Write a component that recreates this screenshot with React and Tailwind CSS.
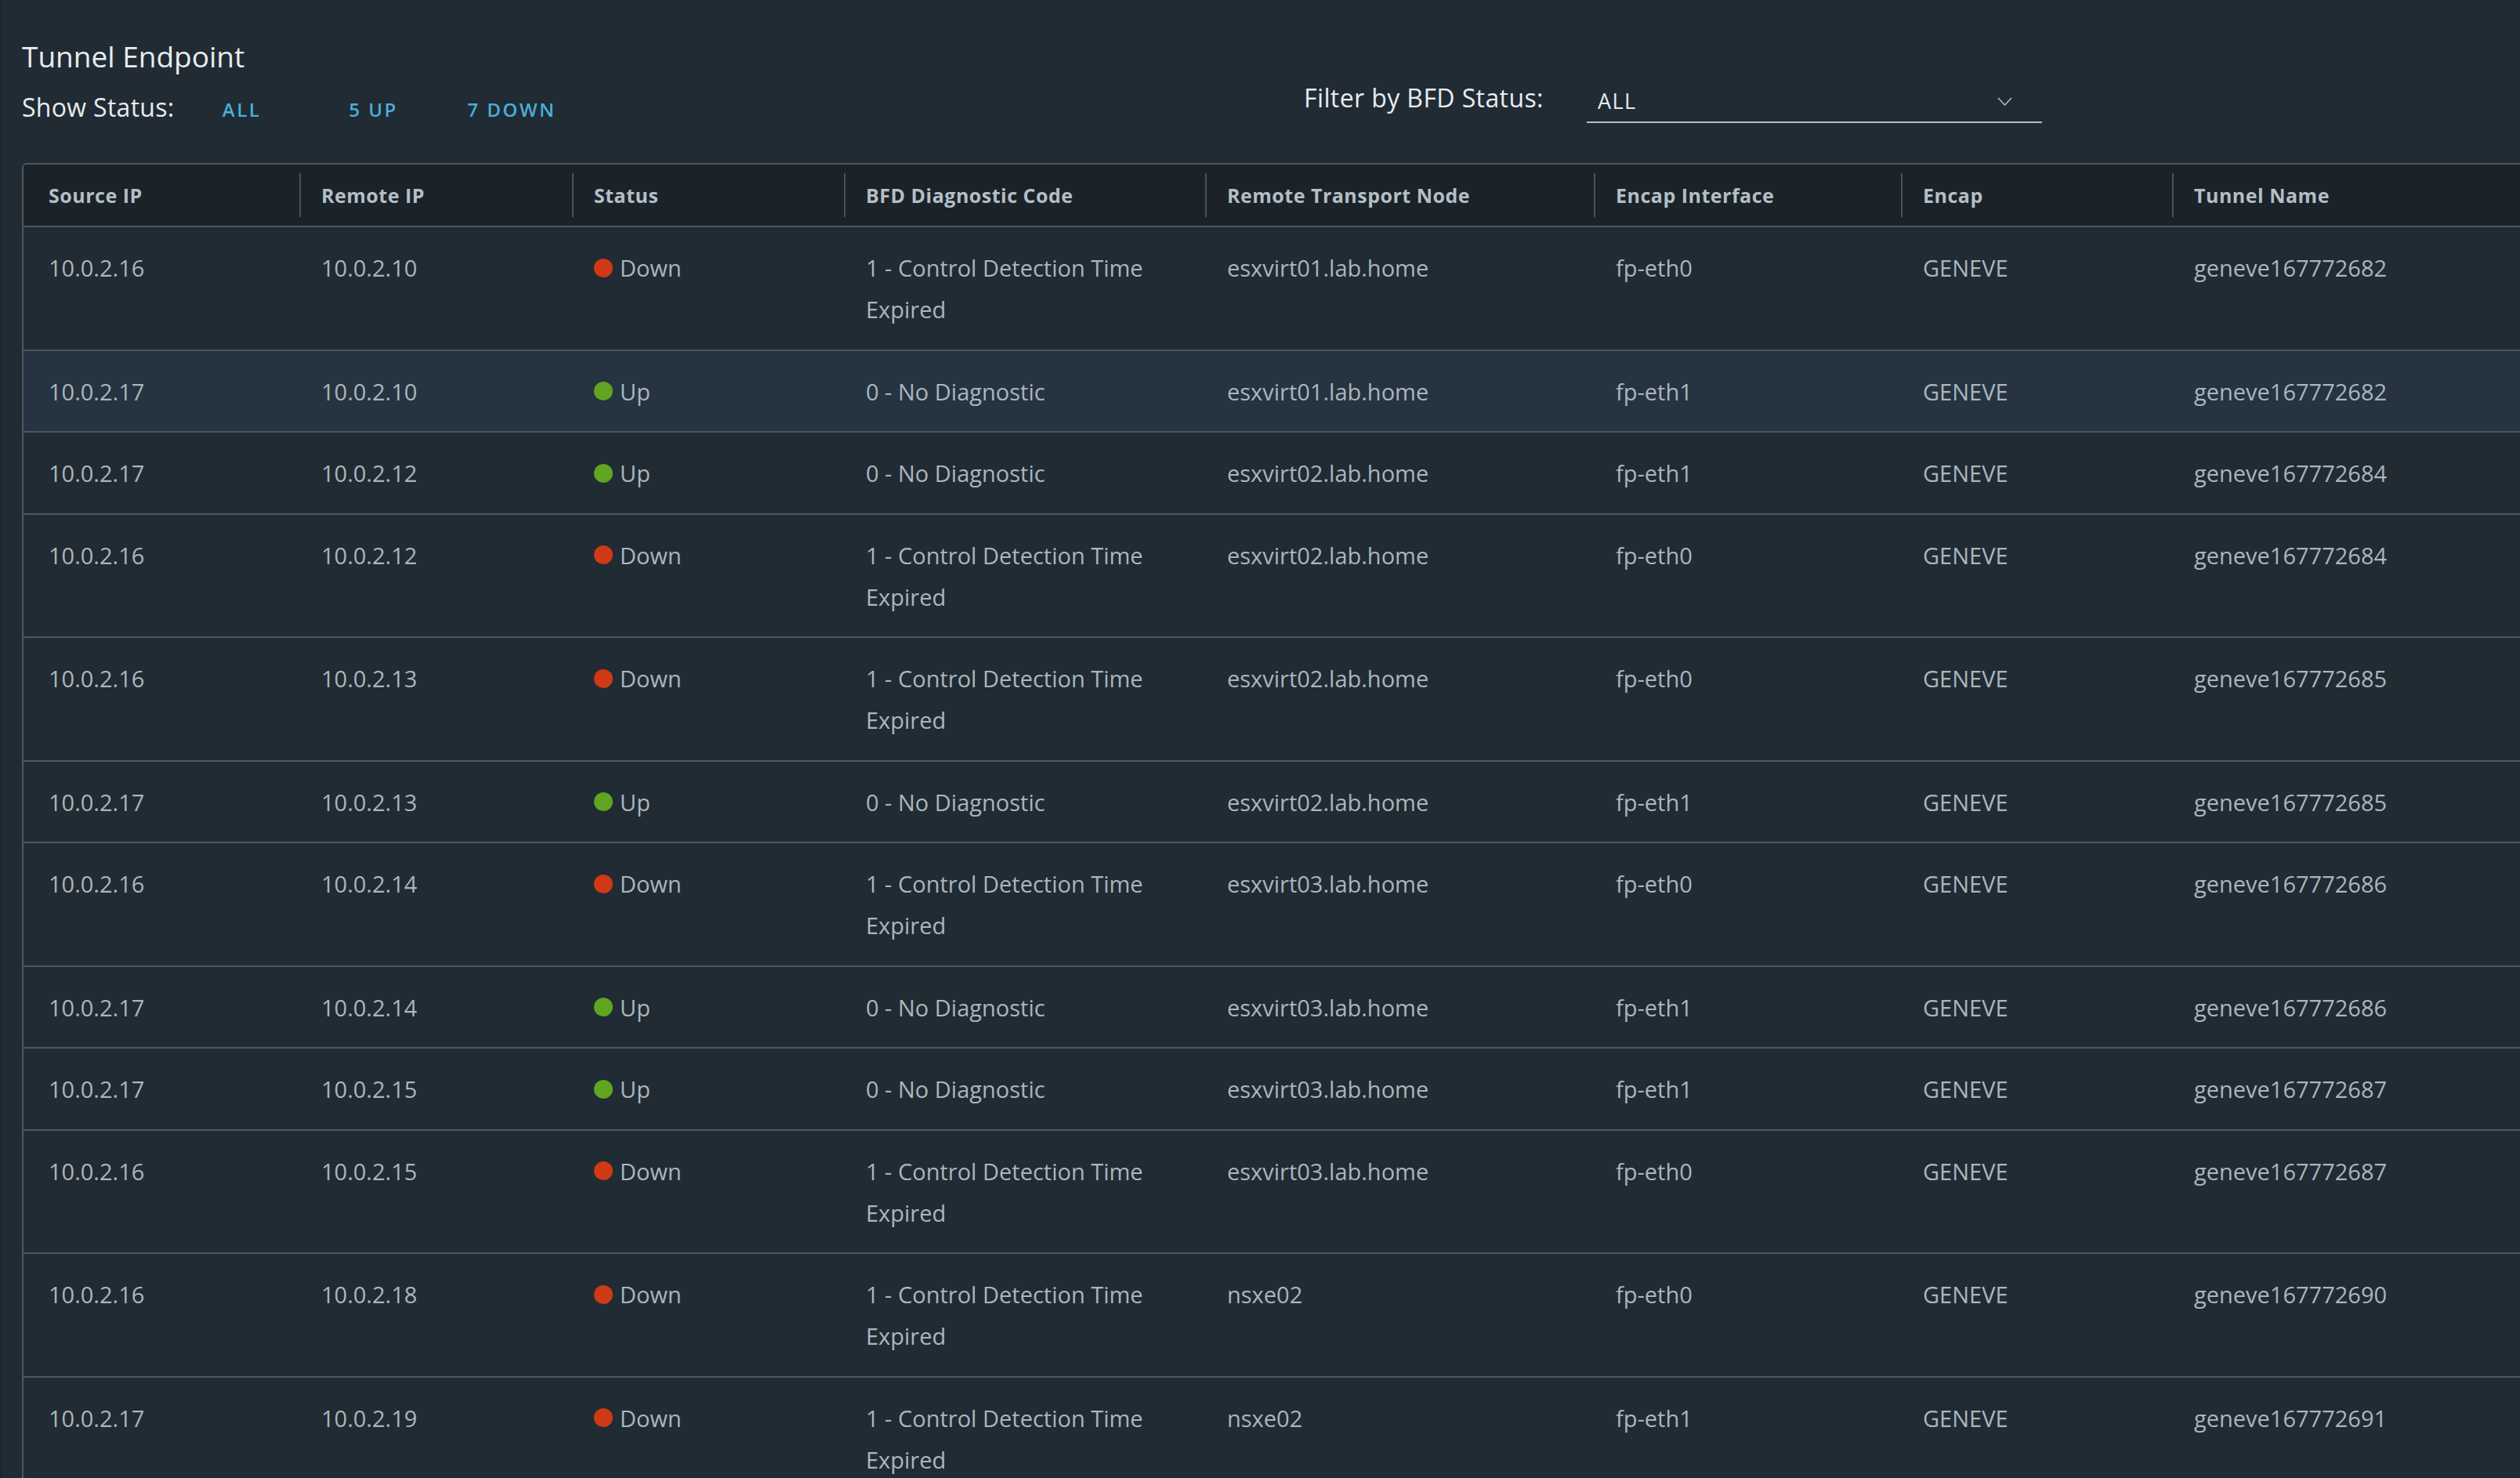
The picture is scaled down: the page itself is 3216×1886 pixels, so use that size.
import React from "react";

const rows = [
  { src: "10.0.2.16", remote: "10.0.2.10", up: false, node: "esxvirt01.lab.home", iface: "fp-eth0", tunnel: "geneve167772682" },
  { src: "10.0.2.17", remote: "10.0.2.10", up: true, node: "esxvirt01.lab.home", iface: "fp-eth1", tunnel: "geneve167772682", active: true },
  { src: "10.0.2.17", remote: "10.0.2.12", up: true, node: "esxvirt02.lab.home", iface: "fp-eth1", tunnel: "geneve167772684" },
  { src: "10.0.2.16", remote: "10.0.2.12", up: false, node: "esxvirt02.lab.home", iface: "fp-eth0", tunnel: "geneve167772684" },
  { src: "10.0.2.16", remote: "10.0.2.13", up: false, node: "esxvirt02.lab.home", iface: "fp-eth0", tunnel: "geneve167772685" },
  { src: "10.0.2.17", remote: "10.0.2.13", up: true, node: "esxvirt02.lab.home", iface: "fp-eth1", tunnel: "geneve167772685" },
  { src: "10.0.2.16", remote: "10.0.2.14", up: false, node: "esxvirt03.lab.home", iface: "fp-eth0", tunnel: "geneve167772686" },
  { src: "10.0.2.17", remote: "10.0.2.14", up: true, node: "esxvirt03.lab.home", iface: "fp-eth1", tunnel: "geneve167772686" },
  { src: "10.0.2.17", remote: "10.0.2.15", up: true, node: "esxvirt03.lab.home", iface: "fp-eth1", tunnel: "geneve167772687" },
  { src: "10.0.2.16", remote: "10.0.2.15", up: false, node: "esxvirt03.lab.home", iface: "fp-eth0", tunnel: "geneve167772687" },
  { src: "10.0.2.16", remote: "10.0.2.18", up: false, node: "nsxe02", iface: "fp-eth0", tunnel: "geneve167772690" },
  { src: "10.0.2.17", remote: "10.0.2.19", up: false, node: "nsxe02", iface: "fp-eth1", tunnel: "geneve167772691" },
];

const columns = [
  "Source IP",
  "Remote IP",
  "Status",
  "BFD Diagnostic Code",
  "Remote Transport Node",
  "Encap Interface",
  "Encap",
  "Tunnel Name",
];

// same track sizes for header and body rows
const grid = "grid grid-cols-[352px_348px_347px_461px_496px_392px_346px_600px]";

const Cell = ({ first, children }) => (
  <div className={first ? "pl-[32px] pr-[28px]" : "px-[28px]"}>{children}</div>
);

export default function App() {
  return (
    <div
      className="h-screen w-full overflow-hidden border-l-2 border-[#1b242b] bg-[#212b34] pl-[26px]"
      style={{ fontFamily: '"Open Sans", sans-serif' }}
    >
      {/* Top bar */}
      <div className="flex">
        <div className="w-[1636px] shrink-0 pt-[48px]">
          <h1 className="text-[37px] leading-[48px] font-normal text-[#e8ecef]">
            Tunnel Endpoint
          </h1>
          <div className="mt-[19px] flex items-baseline">
            <span className="text-[32px] leading-[44px] font-medium tracking-[0.3px] text-[#e8ecef]">
              Show Status:
            </span>
            <div className="ml-[14px] flex items-baseline gap-[24px]">
              <button className="min-w-[144px] px-[24px] text-[24px] font-semibold tracking-[2.5px] text-[#49afd9]">
                ALL
              </button>
              <button className="min-w-[144px] px-[24px] text-[24px] font-semibold tracking-[2.5px] text-[#49afd9]">
                5 UP
              </button>
              <button className="min-w-[144px] px-[24px] text-[24px] font-semibold tracking-[2.5px] text-[#49afd9]">
                7 DOWN
              </button>
            </div>
          </div>
        </div>
        <div className="flex items-start pt-[103px]">
          <span className="text-[32px] leading-[44px] font-medium tracking-[0.4px] text-[#e8ecef]">
            Filter by BFD Status:
          </span>
          <div className="ml-[55px] mt-[8px] h-[46px] w-[581px] border-b-2 border-[#b3bec6]">
            <div className="flex h-[36px] items-center justify-between pl-[14px] pr-[38px]">
              <span className="text-[27px] leading-[36px] tracking-[1.5px] text-[#e8ecef]">ALL</span>
              <svg width="19" height="11" viewBox="0 0 19 11" fill="none">
                <polyline points="1,1 9.5,10 18,1" stroke="#adbac3" strokeWidth="1.6" />
              </svg>
            </div>
          </div>
        </div>
      </div>

      {/* Datagrid */}
      <div className="mt-[49px] w-fit rounded-[6px] border-2 border-[#4a5866]">
        <div className={`${grid} h-[80px] items-center border-b-2 border-[#4a5866] bg-[#1b2329] rounded-t-[4px]`}>
          {columns.map((c, i) => (
            <div key={c} className={i === 0 ? "pl-[32px]" : "flex items-center"}>
              {i > 0 && <span className="h-[56px] w-[2px] bg-[#46535f]" />}
              <span
                className={`mt-[1px] inline-block text-[25px] font-bold tracking-[0.5px] text-[#b3bfc7] ${i > 0 ? "ml-[26px]" : ""}`}
              >
                {c}
              </span>
            </div>
          ))}
        </div>
        {rows.map((r, idx) => (
          <div
            key={idx}
            className={`${grid} border-b-2 border-[#4a5866] pt-[25px] pb-[24.5px] text-[29px] leading-[53px] text-[#a9b6be] ${
              r.active ? "bg-[#263441]" : "bg-[#212b34]"
            }`}
          >
            <Cell first>{r.src}</Cell>
            <Cell>{r.remote}</Cell>
            <Cell>
              <div className="flex h-[53px] items-center gap-[9px]">
                <span
                  className={`h-[24px] w-[24px] rounded-full ${r.up ? "bg-[#60a421]" : "bg-[#cf3915]"}`}
                />
                <span>{r.up ? "Up" : "Down"}</span>
              </div>
            </Cell>
            <Cell>{r.up ? "0 - No Diagnostic" : "1 - Control Detection Time Expired"}</Cell>
            <Cell>{r.node}</Cell>
            <Cell>{r.iface}</Cell>
            <Cell>GENEVE</Cell>
            <Cell>{r.tunnel}</Cell>
          </div>
        ))}
      </div>
    </div>
  );
}
